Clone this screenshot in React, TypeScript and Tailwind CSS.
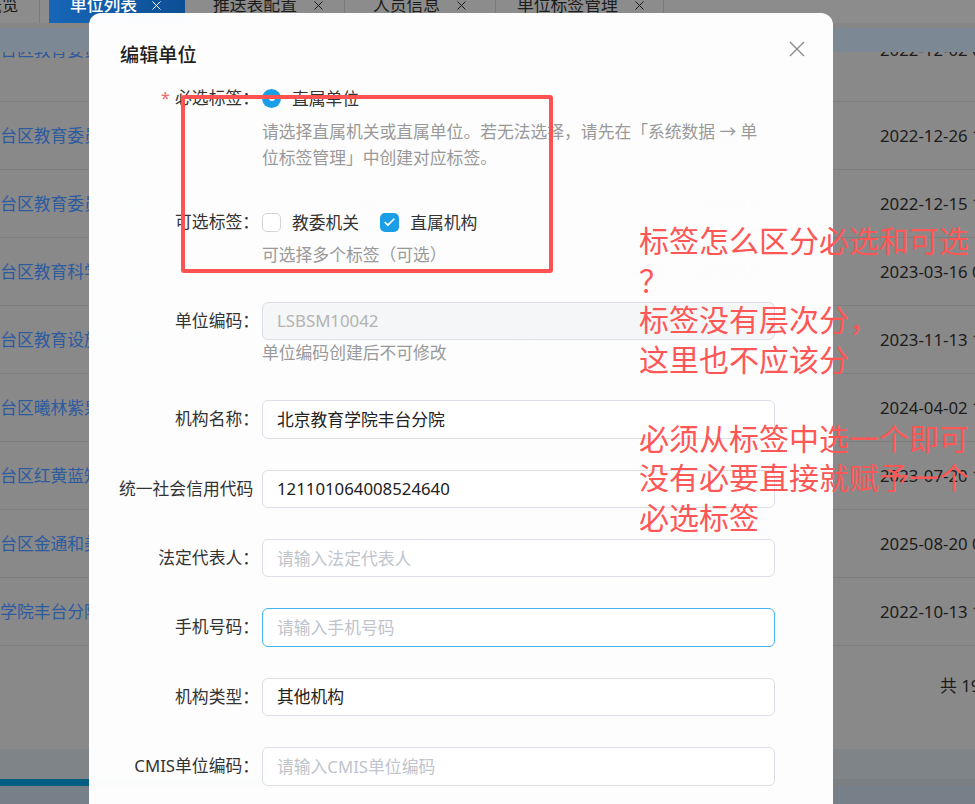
import React from 'react';
import { X, Check } from 'lucide-react';

const font = "font-['Noto_Sans','Noto_Sans_CJK_SC',sans-serif]";

const rows = [
  { name: '北京市丰台区教育委员会学生发展中心', code: 'LSBSM116', credit: '12110106MB1H52341K', type: '其他机构', date: '2022-12-26 10:21:37' },
  { name: '北京市丰台区教育委员会虚拟单位', code: 'LSBSM117', credit: '', type: '其他机构', date: '2022-12-15 16:02:11' },
  { name: '北京市丰台区教育科学研究院', code: 'LSBSM10085', credit: '121101064008500853', type: '其他机构', date: '2023-03-16 09:44:52' },
  { name: '北京市丰台区教育设施保障中心', code: 'LSBSM10091', credit: '12110106MB1H1011XQ', type: '其他机构', date: '2023-11-13 14:10:05' },
  { name: '北京市丰台区曦林紫泉幼儿园', code: 'LSBSM10112', credit: '52110106MJ0263587T', type: '幼儿园', date: '2024-04-02 11:36:48' },
  { name: '北京市丰台区红黄蓝知音幼儿园', code: 'LSBSM10104', credit: '52110106MJ0211459B', type: '幼儿园', date: '2023-07-20 15:27:30' },
  { name: '北京市丰台区金通和美幼儿园', code: 'LSBSM10133', credit: '52110106MJ0298772C', type: '幼儿园', date: '2025-08-20 08:59:14' },
  { name: '北京教育学院丰台分院', code: 'LSBSM10042', credit: '121101064008524640', type: '其他机构', date: '2022-10-13 17:05:22' },
];

function TableRow({ r }: { r: (typeof rows)[number] }) {
  return (
    <div className="flex h-[68px] items-center border-t border-[#7e7e7e] whitespace-nowrap">
      <div className="w-[322px] shrink-0 overflow-hidden">
        <div className="-ml-[67px] text-[#2d5ba0]">{r.name}</div>
      </div>
      <div className="w-[190px] shrink-0 text-[#1c1c1c]">{r.code}</div>
      <div className="w-[185px] shrink-0 text-[#1c1c1c]">{r.credit}</div>
      <div className="w-[183px] shrink-0 text-[#1c1c1c]">{r.type}</div>
      <div className="flex-1 overflow-hidden text-[#1c1c1c]">{r.date}</div>
    </div>
  );
}

function Field({
  label,
  required,
  children,
  help,
  className = '',
}: {
  label: React.ReactNode;
  required?: boolean;
  children: React.ReactNode;
  help?: React.ReactNode;
  className?: string;
}) {
  return (
    <div className={`flex gap-[3px] ${className}`}>
      <div className="h-[38.4px] w-[140px] shrink-0 overflow-hidden whitespace-nowrap text-right leading-[38.4px] text-[#333]">
        {required && <span className="mr-[5px] text-[#f56c6c]">*</span>}
        {label}
      </div>
      <div className="flex w-[513px] flex-col">
        {children}
        {help && <div className="leading-[26px] text-[#999]">{help}</div>}
      </div>
    </div>
  );
}

function Input({
  value,
  placeholder,
  disabled,
  focused,
}: {
  value?: string;
  placeholder?: string;
  disabled?: boolean;
  focused?: boolean;
}) {
  const border = focused ? 'border-[#45b3ef]' : 'border-[#dcdfe6]';
  const bg = disabled ? 'bg-[#f5f6f7]' : 'bg-white';
  const color = disabled ? 'text-[#b3b3b3]' : value ? 'text-[#222]' : 'text-[#c0c4cc]';
  return (
    <div className={`flex h-[38.4px] items-center rounded-[6px] border px-[14px] ${border} ${bg} ${color}`}>
      {value || placeholder}
    </div>
  );
}

export default function App() {
  return (
    <div className={`relative h-[804px] w-[975px] overflow-hidden bg-[#898989] text-[16.8px] ${font}`}>
      {/* page behind the dialog (dimmed) */}
      <div className="flex h-[23px] overflow-hidden bg-[#8c8c8c] whitespace-nowrap">
        <div className="-mt-[13px] flex h-[36px] w-full items-center">
          <div className="flex h-full w-[40px] items-center overflow-hidden border-r border-[#7b7b7b] text-[#1c1c1c]">
            <span className="-ml-[15px]">概览</span>
          </div>
          <div className="w-[9px]" />
          <div className="flex h-full w-[136px] items-center gap-[12px] bg-gradient-to-r from-[#1766b8] to-[#0c4f95] pl-[21px] font-medium text-white">
            单位列表 <X size={15} strokeWidth={1.6} />
          </div>
          <div className="flex h-full w-[160px] items-center gap-[14px] border-r border-[#7b7b7b] pl-[28px] text-[#1c1c1c]">
            推送表配置 <X size={15} strokeWidth={1.6} />
          </div>
          <div className="flex h-full w-[151px] items-center gap-[14px] border-r border-[#7b7b7b] pl-[28px] text-[#1c1c1c]">
            人员信息 <X size={15} strokeWidth={1.6} />
          </div>
          <div className="flex h-full w-[168px] items-center gap-[14px] border-r border-[#7b7b7b] pl-[21px] text-[#1c1c1c]">
            单位标签管理 <X size={15} strokeWidth={1.6} />
          </div>
        </div>
      </div>
      <div className="h-[5px] bg-[#868686]" />
      <div className="h-[24px] bg-[#7c8994]" />
      <div className="flex h-[49px] items-start overflow-hidden whitespace-nowrap">
        <div className="-mt-[12px] flex w-full leading-[20px]">
          <div className="w-[322px] shrink-0 overflow-hidden">
            <div className="-ml-[67px] text-[#2d5ba0]">北京市丰台区教育委员会</div>
          </div>
          <div className="w-[190px] shrink-0 text-[#1c1c1c]">LSBSM115</div>
          <div className="w-[185px] shrink-0 text-[#1c1c1c]">12110106MB1H4413X</div>
          <div className="w-[183px] shrink-0 text-[#1c1c1c]">其他机构</div>
          <div className="flex-1 text-[#1c1c1c]">2022-12-02 09:12:40</div>
        </div>
      </div>
      {rows.map((r) => (
        <TableRow key={r.code} r={r} />
      ))}
      <div className="flex h-[104px] justify-end border-t border-[#7e7e7e] pt-[29px] leading-[22px] text-[#1c1c1c]">
        <span className="w-[35px] overflow-hidden whitespace-nowrap">共 19 条</span>
      </div>
      <div className="h-[30px] bg-[#7f8488]" />
      <div className="h-[7px] bg-[#7b7f81]">
        <div className="h-full w-[420px] bg-[#005f80]" />
      </div>
      <div className="h-[18px] bg-[#778089]" />

      {/* dialog */}
      <div className="absolute left-[89px] top-[13px] h-[830px] w-[744px] rounded-[12px] bg-white/[0.985]">
        <div className="flex items-start justify-between pl-[31px] pr-[28px] pt-[27.5px]">
          <div className="bg-white text-[19.2px] font-medium leading-[27px] text-[#1f1f1f]">编辑单位</div>
          <svg width="16" height="16" viewBox="0 0 16 16">
            <path d="M1 1L15 15M15 1L1 15" stroke="#8c8c8c" strokeWidth="1.4" />
          </svg>
        </div>

        <div className="flex flex-col pl-[30px] pt-[11.5px]">
          <Field
            label="必选标签："
            required
            className="mb-[32px]"
            help={
              <div className="mt-[2px]">
                请选择直属机关或直属单位。若无法选择，请先在「系统数据 → 单
                <br />
                位标签管理」中创建对应标签。
              </div>
            }
          >
            <div className="flex h-[38.4px] items-center">
              <div className="flex h-[19px] w-[19px] items-center justify-center rounded-full bg-[#1a9fe6]">
                <div className="h-[6px] w-[6px] rounded-full bg-white" />
              </div>
              <span className="ml-[11px] text-[#333]">直属单位</span>
            </div>
          </Field>

          <Field label="可选标签：" className="mb-[34px]" help="可选择多个标签（可选）">
            <div className="flex h-[38.4px] items-center">
              <div className="h-[19px] w-[19px] rounded-[5px] border border-[#d4d4d4] bg-white" />
              <span className="ml-[11px] text-[#333]">教委机关</span>
              <div className="ml-[21px] flex h-[19px] w-[19px] items-center justify-center rounded-[5px] bg-[#1a9fe6]">
                <Check size={13} strokeWidth={3.2} color="#fff" />
              </div>
              <span className="ml-[11px] text-[#333]">直属机构</span>
            </div>
          </Field>

          <Field label="单位编码：" className="mb-[34px]" help="单位编码创建后不可修改">
            <Input value="LSBSM10042" disabled />
          </Field>

          <Field label="机构名称：" className="mb-[31px]">
            <Input value="北京教育学院丰台分院" />
          </Field>

          <Field
            label={
              <>
                统一社会信用代码<span className="text-transparent">：</span>
              </>
            }
            className="mb-[31px]"
          >
            <Input value="121101064008524640" />
          </Field>

          <Field label="法定代表人：" className="mb-[31px]">
            <Input placeholder="请输入法定代表人" />
          </Field>

          <Field label="手机号码：" className="mb-[31px]">
            <Input placeholder="请输入手机号码" focused />
          </Field>

          <Field label="机构类型：" className="mb-[31px]">
            <Input value="其他机构" />
          </Field>

          <Field label="CMIS单位编码：">
            <Input placeholder="请输入CMIS单位编码" />
          </Field>
        </div>
      </div>

      {/* review annotations */}
      <div className="absolute left-[181px] top-[95px] h-[178px] w-[372px] rounded-[3px] border-4 border-[#ff5252]" />
      <div className="absolute left-[639px] top-[221px] whitespace-pre text-[30px] leading-[39.5px] text-[#ff5656]">
        {'标签怎么区分必选和可选\n？\n标签没有层次分，\n这里也不应该分\n\n必须从标签中选一个即可\n没有必要直接就赋予一个\n必选标签'}
      </div>
    </div>
  );
}
